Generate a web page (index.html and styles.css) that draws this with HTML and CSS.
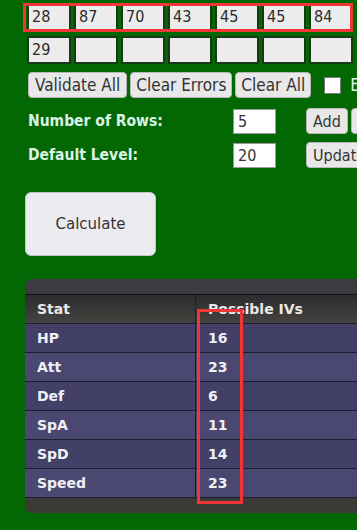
FILE: index.html
```html
<!DOCTYPE html>
<html lang="en">

<head>
    <meta charset="UTF-8">
    <meta name="viewport" content="width=device-width, initial-scale=1.0">
    <title>IV Calculator</title>
    <link rel="stylesheet" href="styles.css">
</head>

<body>

    <div class="page">
        <div class="grid-wrap">
            <div class="iv-grid">
                <div class="cell">28</div>
                <div class="cell">87</div>
                <div class="cell">70</div>
                <div class="cell">43</div>
                <div class="cell">45</div>
                <div class="cell">45</div>
                <div class="cell">84</div>
                <div class="cell">29</div>
                <div class="cell"></div>
                <div class="cell"></div>
                <div class="cell"></div>
                <div class="cell"></div>
                <div class="cell"></div>
                <div class="cell"></div>
            </div>
            <div class="mark mark-row"></div>
        </div>

        <div class="actions">
            <button class="btn">Validate All</button>
            <button class="btn">Clear Errors</button>
            <button class="btn">Clear All</button>
            <label class="check"><span class="box"></span>Enable</label>
        </div>

        <div class="settings">
            <div class="setting">
                <span class="label">Number of Rows:</span>
                <span class="field">5</span>
                <div class="setting-btns">
                    <button class="btn">Add</button>
                    <button class="btn">Remove</button>
                </div>
            </div>
            <div class="setting">
                <span class="label">Default Level:</span>
                <span class="field">20</span>
                <div class="setting-btns">
                    <button class="btn">Update</button>
                </div>
            </div>
        </div>

        <button class="calc">Calculate</button>

        <div class="results">
            <div class="results-top"></div>
            <table class="stats">
                <thead>
                    <tr>
                        <th>Stat</th>
                        <th>Possible IVs</th>
                    </tr>
                </thead>
                <tbody>
                    <tr><td>HP</td><td>16</td></tr>
                    <tr><td>Att</td><td>23</td></tr>
                    <tr><td>Def</td><td>6</td></tr>
                    <tr><td>SpA</td><td>11</td></tr>
                    <tr><td>SpD</td><td>14</td></tr>
                    <tr><td>Speed</td><td>23</td></tr>
                </tbody>
            </table>
            <div class="results-bottom"></div>
            <div class="mark mark-col"></div>
        </div>
    </div>

</body>

</html>
```

FILE: styles.css
```css
html,
body {
    margin: 0;
    height: 100%;
    overflow: hidden;
    background-color: #036803;
    font-family: "DejaVu Sans Condensed", "DejaVu Sans", sans-serif;
}

.page {
    width: 420px;
    padding: 3px 0 0 25px;
}

.grid-wrap {
    position: relative;
}

.iv-grid {
    display: grid;
    grid-template-columns: repeat(7, 44px);
    column-gap: 3px;
    row-gap: 5px;
    padding-left: 2px;
}

.cell {
    height: 24px;
    border: 2px solid #163a16;
    background: #ececec;
    font-size: 16px;
    line-height: 24px;
    padding-left: 3px;
    color: #2a2a2a;
}

.mark {
    position: absolute;
    border: 3px solid #ef3535;
}

.mark-row {
    left: -2px;
    top: 0;
    width: 324px;
    height: 23px;
}

.actions {
    display: flex;
    align-items: center;
    gap: 3px;
    margin-top: 8px;
    padding-left: 3px;
}

.btn {
    height: 26px;
    padding: 0 6px;
    background: #e8e8e8;
    border: 1px solid #b8b8b8;
    border-radius: 4px;
    font-family: inherit;
    font-size: 16px;
    color: #333;
    white-space: nowrap;
}

.actions .btn {
    font-size: 17px;
    padding: 0 5px;
}

.actions .btn:first-child {
    padding: 0 6px;
}

.check {
    display: flex;
    align-items: center;
    margin-left: 10px;
    gap: 9px;
    font-size: 17px;
    color: #e6f2e6;
}

.box {
    width: 15px;
    height: 15px;
    background: #fff;
    border: 1px solid #777;
}

.settings {
    margin-top: 6px;
}

.setting {
    display: flex;
    align-items: center;
    height: 34px;
    padding-left: 3px;
}

.label {
    width: 205px;
    font-size: 15.5px;
    font-weight: bold;
    color: #dcf2e2;
}

.field {
    width: 37px;
    height: 23px;
    padding-left: 4px;
    background: #fff;
    border: 1px solid #999;
    font-size: 16px;
    line-height: 23px;
    color: #333;
}

.setting-btns {
    display: flex;
    gap: 3px;
    margin-left: 30px;
}

.calc {
    display: block;
    width: 131px;
    height: 64px;
    margin-top: 20px;
    background: #ebebf0;
    border: 1px solid #c4c4c8;
    border-radius: 6px;
    font-family: "DejaVu Sans", sans-serif;
    font-size: 15px;
    color: #333;
}

.results {
    position: relative;
    margin-top: 23px;
    width: 400px;
    background: #3c3b3f;
    border-radius: 8px 0 0 8px;
}

.results-top {
    height: 15px;
    border-bottom: 1px solid #111;
    border-radius: 8px 0 0 0;
}

.results-bottom {
    height: 15px;
    background: #3b3a37;
    border-radius: 0 0 0 8px;
}

.stats {
    width: 100%;
    border-collapse: collapse;
    font-family: "DejaVu Sans", sans-serif;
    font-size: 14px;
    color: #f0f0f4;
}

.stats th,
.stats td {
    height: 28px;
    padding: 0 0 0 12px;
    text-align: left;
    border-bottom: 1px solid #1e1c2e;
}

.stats th {
    font-weight: bold;
    background: linear-gradient(#2c2c30, #45433f);
    color: #e8e8e8;
}

.stats td {
    font-weight: bold;
}

.stats th:first-child,
.stats td:first-child {
    width: 158px;
    border-right: 1px solid #1e1c2e;
}

.stats tbody tr:nth-child(odd) {
    background: #434068;
}

.stats tbody tr:nth-child(even) {
    background: #4a4770;
}

.mark-col {
    left: 172px;
    top: 30px;
    width: 40px;
    height: 189px;
}
```
